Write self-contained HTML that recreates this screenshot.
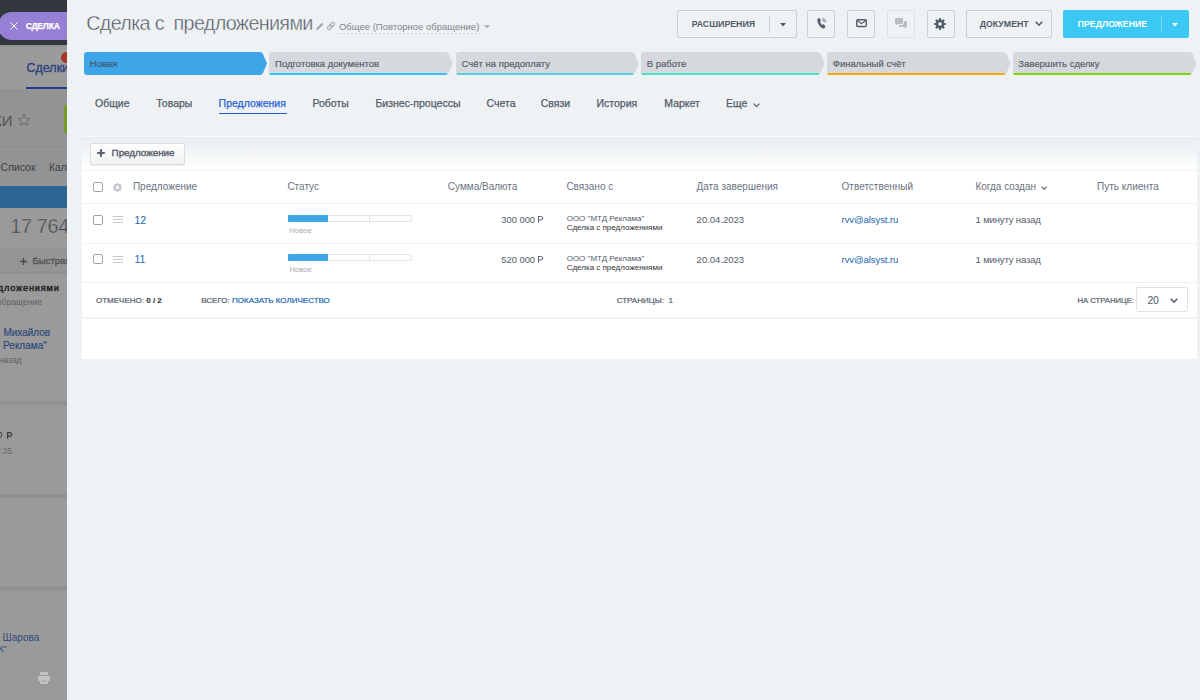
<!DOCTYPE html>
<html><head><meta charset="utf-8">
<style>
*{box-sizing:border-box;margin:0;padding:0}
html,body{width:1200px;height:700px;overflow:hidden;font-family:"Liberation Sans",sans-serif;background:#eef2f4;position:relative}
.abs{position:absolute}
.t{position:absolute;white-space:nowrap;line-height:1}
svg{position:absolute;overflow:visible}
</style></head>
<body>
<div class="abs" style="left:0px;top:0px;width:67px;height:700px;background:#9a9a9a"></div>
<div class="abs" style="left:0px;top:45px;width:67px;height:44px;background:#9b9b9b"></div>
<div class="abs" style="left:0px;top:89px;width:67px;height:97px;background:#929394"></div>
<div class="abs" style="left:0px;top:248px;width:67px;height:23px;background:#959595"></div>
<div class="abs" style="left:0px;top:0px;width:67px;height:45px;background:#33373e"></div>
<div class="abs" style="left:0px;top:45px;width:67px;height:2px;background:linear-gradient(rgba(0,0,0,.07),rgba(0,0,0,0))"></div>
<div class="abs" style="left:-2px;top:12px;width:69px;height:28px;background:#9580d5;border-radius:14px 0 0 14px"></div>
<svg style="left:10px;top:22px" width="8" height="8"><path d="M0.5 0.5L7.5 7.5M7.5 0.5L0.5 7.5" stroke="#fff" stroke-width="1"/></svg>
<div class="t" style="left:25.66px;top:22.32px;font-size:8.6px;color:#fff;font-weight:700;letter-spacing:-0.25px;-webkit-text-stroke:0.25px #fff">СДЕЛКА</div>
<div class="abs" style="left:61px;top:52px;width:11px;height:11px;border-radius:50%;background:#a3372a"></div>
<div class="t" style="left:26.50px;top:61.92px;font-size:12.5px;color:#2d3f7e;-webkit-text-stroke:0.35px #2d3f7e">Сделки</div>
<div class="abs" style="left:26px;top:87px;width:41px;height:2px;background:#1f3f86"></div>
<div class="abs" style="left:0px;top:146px;width:67px;height:1px;background:#8b8e8f"></div>
<div class="t" style="left:-6.80px;top:113.10px;font-size:15px;color:#2f2f2f;letter-spacing:-0.2px;-webkit-text-stroke:0.4px #929394">КИ</div>
<svg style="left:17px;top:113px" width="14" height="14" viewBox="0 0 24 24"><path d="M12 2l2.9 6.9 7.1.6-5.4 4.7 1.7 7.2L12 17.6 5.7 21.4l1.7-7.2L2 9.5l7.1-.6z" fill="none" stroke="#6b6b6b" stroke-width="1.6"/></svg>
<div class="abs" style="left:63.5px;top:105px;width:3.5px;height:28px;background:#739d27"></div>
<div class="t" style="left:0.58px;top:162.11px;font-size:10.5px;color:#3f3f3f;">Список</div>
<div class="t" style="left:48.88px;top:162.11px;font-size:10.5px;color:#3f3f3f;">Кал</div>
<div class="abs" style="left:0px;top:186px;width:67px;height:22px;background:#2b6591"></div>
<div class="t" style="left:10.21px;top:217.24px;font-size:19.8px;color:#44484d;letter-spacing:-0.3px;-webkit-text-stroke:0.45px #9a9a9a">17 764</div>
<svg style="left:20px;top:258px" width="7" height="7"><path d="M3.5 0V7M0 3.5H7" stroke="#4a4a4a" stroke-width="1.4"/></svg>
<div class="t" style="left:32.62px;top:255.96px;font-size:9.5px;color:#505050;-webkit-text-stroke:0.3px #505050">Быстрая</div>
<div class="abs" style="left:0px;top:271px;width:67px;height:3px;background:#8f9193"></div>
<div class="t" style="left:-2.17px;top:283.91px;font-size:9.2px;color:#262626;letter-spacing:0.8px;-webkit-text-stroke:0.45px #262626">дложениями</div>
<div class="t" style="left:-2.94px;top:297.60px;font-size:8.5px;color:#5e5e5e;">обращение</div>
<div class="t" style="left:3.40px;top:327.54px;font-size:10px;color:#304a7c;-webkit-text-stroke:0.2px #304a7c">Михайлов</div>
<div class="t" style="left:3.10px;top:340.54px;font-size:10px;color:#304a7c;-webkit-text-stroke:0.2px #304a7c">Реклама"</div>
<div class="t" style="left:-1.34px;top:355.80px;font-size:8.5px;color:#5e5e5e;">назад</div>
<div class="abs" style="left:0px;top:401px;width:67px;height:4px;background:#8f9193"></div>
<div class="t" style="left:-2.77px;top:431.21px;font-size:9.2px;color:#3b3b3b;">0</div>
<svg style="left:6.60px;top:432.30px" width="6.03" height="6.80" viewBox="0 0 6.03 6.80"><path d="M0.60 0V6.80M0.60 0.60H2.96A1.47 1.47 0 0 1 2.96 4.14H0" fill="none" stroke="#3b3b3b" stroke-width="1.2"/></svg>
<div class="t" style="left:-0.36px;top:447.38px;font-size:9px;color:#6a6a6a;">:35</div>
<div class="abs" style="left:0px;top:494px;width:67px;height:4px;background:#8f9193"></div>
<div class="abs" style="left:0px;top:586px;width:67px;height:5px;background:#8f9193"></div>
<div class="t" style="left:2.60px;top:632.53px;font-size:10px;color:#2d4a7e;">Шарова</div>
<div class="t" style="left:-1.86px;top:645.38px;font-size:9px;color:#304a7c;">К"</div>
<svg style="left:38px;top:672px" width="12" height="12"><rect x="2" y="0" width="8" height="3" fill="#c4c4c4"/><rect x="0" y="4" width="12" height="5" rx="1" fill="#c4c4c4"/><rect x="2" y="8" width="8" height="4" fill="#c4c4c4"/><rect x="3" y="8.5" width="6" height="1.2" fill="#a8a8a8"/></svg>
<div class="abs" style="left:67px;top:0px;width:1133px;height:700px;background:#eef2f4"></div>
<div class="t" style="left:86.21px;top:14.24px;font-size:19.8px;color:#474f5a;letter-spacing:-0.68px;-webkit-text-stroke:0.45px #eef2f4">Сделка с&nbsp; предложениями</div>
<svg style="left:315px;top:22px" width="9" height="9"><path d="M1.2 7.9L1.7 5.9L6.2 1.4Q7 0.6 7.8 1.4Q8.5 2.2 7.7 3L3.2 7.4z" fill="#a3a8af"/></svg>
<svg style="left:326px;top:21px" width="10" height="10"><g transform="rotate(-45 5 5)" fill="none" stroke="#a8adb4" stroke-width="1.1"><rect x="0.6" y="3.4" width="5.4" height="3.2" rx="1.6"/><rect x="4" y="3.4" width="5.4" height="3.2" rx="1.6"/></g></svg>
<div class="t" style="left:338.92px;top:21.96px;font-size:9.5px;color:#80868e;">Общее (Повторное обращение)</div>
<div class="abs" style="left:339px;top:32.5px;width:141px;height:1px;background:repeating-linear-gradient(90deg,#c9cdd2 0 2px,transparent 2px 4px);opacity:.75"></div>
<svg style="left:484px;top:25px" width="6" height="4"><path d="M0 0H6L3 3.5z" fill="#b0b5bb"/></svg>
<div class="abs" style="left:677px;top:10px;width:120px;height:28px;border:1px solid #c8ced3;border-radius:2px"></div>
<div class="t" style="left:691.65px;top:20.25px;font-size:8.8px;color:#535c69;font-weight:700;letter-spacing:0px;">РАСШИРЕНИЯ</div>
<div class="abs" style="left:769px;top:16px;width:1px;height:17px;background:#c8ced3"></div>
<svg style="left:780px;top:23px" width="6" height="4"><path d="M0 0H6L3 3.5z" fill="#535c69"/></svg>
<div class="abs" style="left:807px;top:10px;width:28px;height:28px;border:1px solid #c8ced3;border-radius:2px"></div>
<div class="abs" style="left:847px;top:10px;width:28px;height:28px;border:1px solid #c8ced3;border-radius:2px"></div>
<div class="abs" style="left:887px;top:10px;width:28px;height:28px;border:1px solid #dfe3e6;border-radius:2px"></div>
<div class="abs" style="left:927px;top:10px;width:28px;height:28px;border:1px solid #c8ced3;border-radius:2px"></div>
<svg style="left:815.5px;top:17px" width="12" height="13" viewBox="0 0 12 14"><path d="M2.2 1.2c.5-.3 1-.2 1.3.2l1.2 1.8c.3.4.2.9-.1 1.2l-.7.6c.4 1.3 1.2 2.6 2.3 3.5l.8-.5c.4-.2.9-.2 1.2.2l1.3 1.7c.3.4.3 1-.1 1.3l-.8.7c-.6.5-1.5.6-2.2.2C3.8 10.6 1.6 7.6.9 4.1.7 3.3 1 2.5 1.6 1.8z" fill="#535c69"/><path d="M6.5 1.5a4.5 4.5 0 0 1 3.8 3.8M6.3 3.4a2.6 2.6 0 0 1 2.2 2.2" fill="none" stroke="#535c69" stroke-width="0.9"/></svg>
<svg style="left:855.5px;top:19.2px" width="11" height="8.3" viewBox="0 0 12 9"><rect x="0.8" y="0.8" width="10.4" height="7.4" rx="1" fill="none" stroke="#535c69" stroke-width="1.5"/><path d="M1.2 1.5L6 5l4.8-3.5" fill="none" stroke="#535c69" stroke-width="1.3"/></svg>
<svg style="left:895px;top:18px" width="12" height="12" viewBox="0 0 12 12"><path d="M0 1a1 1 0 0 1 1-1h6a1 1 0 0 1 1 1v4a1 1 0 0 1-1 1H3L1.2 7.5V6H1a1 1 0 0 1-1-1z" fill="#b9bec4"/><path d="M9 3h2a1 1 0 0 1 1 1v4a1 1 0 0 1-1 1h-.2v1.5L9 9H5a1 1 0 0 1-1-1V7h3.2A1.8 1.8 0 0 0 9 5.2z" fill="#b9bec4"/></svg>
<svg style="left:934.2px;top:18px" width="12" height="12" viewBox="0 0 24 24"><path d="M9.36 4.03 L10.44 0.10 L13.56 0.10 L14.64 4.03 L15.77 4.49 L19.31 2.49 L21.51 4.69 L19.51 8.23 L19.97 9.36 L23.90 10.44 L23.90 13.56 L19.97 14.64 L19.51 15.77 L21.51 19.31 L19.31 21.51 L15.77 19.51 L14.64 19.97 L13.56 23.90 L10.44 23.90 L9.36 19.97 L8.23 19.51 L4.69 21.51 L2.49 19.31 L4.49 15.77 L4.03 14.64 L0.10 13.56 L0.10 10.44 L4.03 9.36 L4.49 8.23 L2.49 4.69 L4.69 2.49 L8.23 4.49z M12 8.4a3.6 3.6 0 1 0 0 7.2a3.6 3.6 0 1 0 0-7.2z" fill="#535c69" fill-rule="evenodd"/></svg>
<div class="abs" style="left:966px;top:10px;width:86px;height:28px;border:1px solid #c8ced3;border-radius:2px"></div>
<div class="t" style="left:979.65px;top:20.25px;font-size:8.8px;color:#535c69;font-weight:700;letter-spacing:0px;">ДОКУМЕНТ</div>
<svg style="left:1035px;top:21px" width="8" height="6"><path d="M0.8 0.8L4 4.2L7.2 0.8" fill="none" stroke="#535c69" stroke-width="1.6"/></svg>
<div class="abs" style="left:1063px;top:10px;width:126px;height:28px;background:#3bc8f5;border-radius:2px"></div>
<div class="t" style="left:1077.65px;top:20.25px;font-size:8.8px;color:#fff;font-weight:700;letter-spacing:0px;">ПРЕДЛОЖЕНИЕ</div>
<div class="abs" style="left:1161px;top:16px;width:1px;height:17px;background:rgba(255,255,255,.35)"></div>
<svg style="left:1172px;top:23px" width="6" height="4"><path d="M0 0H6L3 3.5z" fill="#fff"/></svg>
<svg style="left:84px;top:52px" width="183.0" height="23"><path d="M3 0H176.0Q178.0 0 179.0 2L183.0 11.5L179.0 21Q178.0 23 176.0 23H3Q0 23 0 20V3Q0 0 3 0z" fill="#3ea6e8"/></svg>
<div class="t" style="left:89.82px;top:58.96px;font-size:9.5px;color:#43566b;-webkit-text-stroke:0.2px #43566b">Новая</div>
<svg style="left:269.3px;top:52px" width="183.7" height="23"><path d="M3 0H176.7Q178.7 0 179.7 2L183.7 11.5L179.7 21Q178.7 23 176.7 23H3Q0 23 0 20V3Q0 0 3 0z" fill="#d5d8dc"/><rect x="0.5" y="21" width="177.7" height="2" rx="1" fill="#2fc6f6"/></svg>
<div class="t" style="left:275.12px;top:58.96px;font-size:9.5px;color:#59616c;-webkit-text-stroke:0.2px #59616c">Подготовка документов</div>
<svg style="left:455.8px;top:52px" width="182.8" height="23"><path d="M3 0H175.8Q177.8 0 178.8 2L182.8 11.5L178.8 21Q177.8 23 175.8 23H3Q0 23 0 20V3Q0 0 3 0z" fill="#d5d8dc"/><rect x="0.5" y="21" width="176.8" height="2" rx="1" fill="#55d0e0"/></svg>
<div class="t" style="left:461.62px;top:58.96px;font-size:9.5px;color:#59616c;-webkit-text-stroke:0.2px #59616c">Счёт на предоплату</div>
<svg style="left:641px;top:52px" width="183.6" height="23"><path d="M3 0H176.6Q178.6 0 179.6 2L183.6 11.5L179.6 21Q178.6 23 176.6 23H3Q0 23 0 20V3Q0 0 3 0z" fill="#d5d8dc"/><rect x="0.5" y="21" width="177.6" height="2" rx="1" fill="#47e4c2"/></svg>
<div class="t" style="left:646.82px;top:58.96px;font-size:9.5px;color:#59616c;-webkit-text-stroke:0.2px #59616c">В работе</div>
<svg style="left:827px;top:52px" width="183.5" height="23"><path d="M3 0H176.5Q178.5 0 179.5 2L183.5 11.5L179.5 21Q178.5 23 176.5 23H3Q0 23 0 20V3Q0 0 3 0z" fill="#d5d8dc"/><rect x="0.5" y="21" width="177.5" height="2" rx="1" fill="#ffa900"/></svg>
<div class="t" style="left:832.82px;top:58.96px;font-size:9.5px;color:#59616c;-webkit-text-stroke:0.2px #59616c">Финальный счёт</div>
<svg style="left:1012.5px;top:52px" width="183.5" height="23"><path d="M3 0H176.5Q178.5 0 179.5 2L183.5 11.5L179.5 21Q178.5 23 176.5 23H3Q0 23 0 20V3Q0 0 3 0z" fill="#d5d8dc"/><rect x="0.5" y="21" width="177.5" height="2" rx="1" fill="#7bd500"/></svg>
<div class="t" style="left:1018.32px;top:58.96px;font-size:9.5px;color:#59616c;-webkit-text-stroke:0.2px #59616c">Завершить сделку</div>
<div class="t" style="left:94.98px;top:98.11px;font-size:10.5px;color:#535c69;-webkit-text-stroke:0.25px #535c69">Общие</div>
<div class="t" style="left:156.28px;top:98.11px;font-size:10.5px;color:#535c69;-webkit-text-stroke:0.25px #535c69">Товары</div>
<div class="t" style="left:218.58px;top:98.11px;font-size:10.5px;color:#2a64d6;-webkit-text-stroke:0.25px #2a64d6">Предложения</div>
<div class="t" style="left:312.38px;top:98.11px;font-size:10.5px;color:#535c69;-webkit-text-stroke:0.25px #535c69">Роботы</div>
<div class="t" style="left:375.38px;top:98.11px;font-size:10.5px;color:#535c69;-webkit-text-stroke:0.25px #535c69">Бизнес-процессы</div>
<div class="t" style="left:486.58px;top:98.11px;font-size:10.5px;color:#535c69;-webkit-text-stroke:0.25px #535c69">Счета</div>
<div class="t" style="left:540.78px;top:98.11px;font-size:10.5px;color:#535c69;-webkit-text-stroke:0.25px #535c69">Связи</div>
<div class="t" style="left:596.48px;top:98.11px;font-size:10.5px;color:#535c69;-webkit-text-stroke:0.25px #535c69">История</div>
<div class="t" style="left:664.28px;top:98.11px;font-size:10.5px;color:#535c69;-webkit-text-stroke:0.25px #535c69">Маркет</div>
<div class="t" style="left:725.88px;top:98.11px;font-size:10.5px;color:#535c69;-webkit-text-stroke:0.25px #535c69">Еще</div>
<div class="abs" style="left:219px;top:112.5px;width:68px;height:1.6px;background:#1f5bd0;border-radius:1px"></div>
<svg style="left:753px;top:103px" width="7" height="5"><path d="M0.6 0.6L3.5 3.6L6.4 0.6" fill="none" stroke="#535c69" stroke-width="1.2"/></svg>
<div class="abs" style="left:82px;top:136px;width:1115px;height:223px;background:#fff;border-radius:2px 2px 0 0"></div>
<div class="abs" style="left:82px;top:137px;width:1115px;height:33px;background:linear-gradient(#e9eef1,#fff)"></div>
<div class="abs" style="left:82px;top:136px;width:1115px;height:1px;background:#f7f9fa;border-radius:2px 2px 0 0"></div>
<div class="abs" style="left:82px;top:170px;width:1115px;height:1px;background:#f0f2f4"></div>
<div class="abs" style="left:90px;top:142.5px;width:95px;height:22px;background:linear-gradient(#fff,#f0f2f4);border:1px solid #d9dee2;border-radius:2px;box-shadow:0 1px 1px rgba(0,0,0,.08)"></div>
<svg style="left:96.5px;top:149.3px" width="8" height="8"><path d="M4 1V7M1 4H7" stroke="#5c6470" stroke-width="2.2" stroke-linecap="round"/></svg>
<div class="t" style="left:111.60px;top:147.62px;font-size:9.9px;color:#59616d;letter-spacing:-0.05px;-webkit-text-stroke:0.4px #59616d">Предложение</div>
<div class="abs" style="left:93px;top:182px;width:10px;height:10px;border:1px solid #9ea3a9;border-radius:2px;background:#fff"></div>
<svg style="left:113px;top:183px" width="9" height="9" viewBox="0 0 24 24"><path d="M10 0h4l.6 3.2 2.2.9 2.7-1.9 2.8 2.8-1.9 2.7.9 2.2L24 10v4l-3.2.6-.9 2.2 1.9 2.7-2.8 2.8-2.7-1.9-2.2.9L14 24h-4l-.6-3.2-2.2-.9-2.7 1.9-2.8-2.8 1.9-2.7-.9-2.2L0 14v-4l3.2-.6.9-2.2L2.2 4.5 5 1.7l2.7 1.9 2.2-.9z M12 7.5a4.5 4.5 0 1 0 0 9 4.5 4.5 0 0 0 0-9z" fill="#c0c4c9" fill-rule="evenodd"/></svg>
<div class="t" style="left:132.90px;top:181.84px;font-size:10px;color:#6a737f;">Предложение</div>
<div class="t" style="left:287.40px;top:181.84px;font-size:10px;color:#6a737f;">Статус</div>
<div class="t" style="left:447.80px;top:181.84px;font-size:10px;color:#6a737f;">Сумма/Валюта</div>
<div class="t" style="left:566.40px;top:181.84px;font-size:10px;color:#6a737f;">Связано с</div>
<div class="t" style="left:696.50px;top:181.84px;font-size:10px;color:#6a737f;">Дата завершения</div>
<div class="t" style="left:841.60px;top:181.84px;font-size:10px;color:#6a737f;">Ответственный</div>
<div class="t" style="left:975.40px;top:181.84px;font-size:10px;color:#6a737f;">Когда создан</div>
<div class="t" style="left:1097.10px;top:181.84px;font-size:10px;color:#6a737f;">Путь клиента</div>
<svg style="left:1041px;top:185.8px" width="7" height="4"><path d="M0.7 0.7L3.2 3.1L5.7 0.7" fill="none" stroke="#6a737f" stroke-width="1.2"/></svg>
<div class="abs" style="left:82px;top:203px;width:1115px;height:1px;background:#eef0f2"></div>
<div class="abs" style="left:82px;top:243px;width:1115px;height:1px;background:#f1f3f5"></div>
<div class="abs" style="left:82px;top:282px;width:1115px;height:1px;background:#eef0f2"></div>
<div class="abs" style="left:93px;top:214.5px;width:10px;height:10px;border:1px solid #9ea3a9;border-radius:2px;background:#fff"></div>
<svg style="left:113px;top:216.0px" width="10" height="8"><path d="M0 0.5H10M0 3.5H10M0 6.5H10" stroke="#c6cacf" stroke-width="1"/></svg>
<div class="t" style="left:134.58px;top:214.91px;font-size:10.5px;color:#2067b0;letter-spacing:-0.2px;">12</div>
<div class="abs" style="left:288px;top:214.5px;width:124px;height:7px;border:1px solid #dfe2e6;border-radius:2px;background:#fff"></div>
<div class="abs" style="left:288px;top:214.5px;width:40px;height:7px;background:#3ea6e8;border-radius:1px 0 0 1px"></div>
<div class="abs" style="left:369px;top:215.0px;width:1px;height:6px;background:#dfe2e6"></div>
<div class="t" style="left:289.39px;top:226.98px;font-size:7.7px;color:#a8adb4;">Новое</div>
<div class="t" style="left:435px;width:100px;text-align:right;top:215.06px;font-size:9.5px;letter-spacing:-0.1px;color:#535c69">300 000</div>
<svg style="left:538.20px;top:216.20px" width="5.96" height="6.70" viewBox="0 0 5.96 6.70"><path d="M0.53 0V6.70M0.53 0.53H2.95A1.48 1.48 0 0 1 2.95 4.01H0" fill="none" stroke="#656c77" stroke-width="1.05"/></svg>
<div class="t" style="left:566.68px;top:215.23px;font-size:8px;color:#535c69;">ООО "МТД Реклама"</div>
<div class="t" style="left:566.68px;top:224.23px;font-size:8px;color:#333;">Сделка с предложениями</div>
<div class="t" style="left:696.62px;top:215.06px;font-size:9.5px;color:#535c69;letter-spacing:0px;">20.04.2023</div>
<div class="t" style="left:841.62px;top:215.06px;font-size:9.5px;color:#2067b0;letter-spacing:-0.08px;">rvv@alsyst.ru</div>
<div class="t" style="left:975.62px;top:215.06px;font-size:9.5px;color:#535c69;letter-spacing:-0.15px;">1 минуту назад</div>
<div class="abs" style="left:93px;top:254.0px;width:10px;height:10px;border:1px solid #9ea3a9;border-radius:2px;background:#fff"></div>
<svg style="left:113px;top:255.5px" width="10" height="8"><path d="M0 0.5H10M0 3.5H10M0 6.5H10" stroke="#c6cacf" stroke-width="1"/></svg>
<div class="t" style="left:134.58px;top:254.41px;font-size:10.5px;color:#2067b0;letter-spacing:-0.2px;">11</div>
<div class="abs" style="left:288px;top:254.0px;width:124px;height:7px;border:1px solid #dfe2e6;border-radius:2px;background:#fff"></div>
<div class="abs" style="left:288px;top:254.0px;width:40px;height:7px;background:#3ea6e8;border-radius:1px 0 0 1px"></div>
<div class="abs" style="left:369px;top:254.5px;width:1px;height:6px;background:#dfe2e6"></div>
<div class="t" style="left:289.39px;top:266.48px;font-size:7.7px;color:#a8adb4;">Новое</div>
<div class="t" style="left:435px;width:100px;text-align:right;top:254.56px;font-size:9.5px;letter-spacing:-0.1px;color:#535c69">520 000</div>
<svg style="left:538.20px;top:255.70px" width="5.96" height="6.70" viewBox="0 0 5.96 6.70"><path d="M0.53 0V6.70M0.53 0.53H2.95A1.48 1.48 0 0 1 2.95 4.01H0" fill="none" stroke="#656c77" stroke-width="1.05"/></svg>
<div class="t" style="left:566.68px;top:254.73px;font-size:8px;color:#535c69;">ООО "МТД Реклама"</div>
<div class="t" style="left:566.68px;top:263.73px;font-size:8px;color:#333;">Сделка с предложениями</div>
<div class="t" style="left:696.62px;top:254.56px;font-size:9.5px;color:#535c69;letter-spacing:0px;">20.04.2023</div>
<div class="t" style="left:841.62px;top:254.56px;font-size:9.5px;color:#2067b0;letter-spacing:-0.08px;">rvv@alsyst.ru</div>
<div class="t" style="left:975.62px;top:254.56px;font-size:9.5px;color:#535c69;letter-spacing:-0.15px;">1 минуту назад</div>
<div class="t" style="left:95.98px;top:297.03px;font-size:8px;color:#535c69;-webkit-text-stroke:0.2px #535c69">ОТМЕЧЕНО: <b style='color:#333'>0 / 2</b></div>
<div class="t" style="left:201.28px;top:297.03px;font-size:8px;color:#535c69;-webkit-text-stroke:0.2px #535c69">ВСЕГО: <span style='color:#2067b0;-webkit-text-stroke:0.2px #2067b0'>ПОКАЗАТЬ КОЛИЧЕСТВО</span></div>
<div class="t" style="left:616.68px;top:297.03px;font-size:8px;color:#535c69;-webkit-text-stroke:0.2px #535c69">СТРАНИЦЫ:&nbsp; 1</div>
<div class="t" style="left:1077.39px;top:297.28px;font-size:7.7px;color:#535c69;-webkit-text-stroke:0.2px #535c69">НА СТРАНИЦЕ:</div>
<div class="abs" style="left:1136px;top:287px;width:52px;height:25px;border:1px solid #dfe3e6;border-radius:2px;background:#fff"></div>
<div class="t" style="left:1147.58px;top:295.11px;font-size:10.5px;color:#535c69;letter-spacing:-0.3px;">20</div>
<svg style="left:1170px;top:297.8px" width="8" height="6"><path d="M0.8 0.8L4 4.2L7.2 0.8" fill="none" stroke="#535c69" stroke-width="1.6"/></svg>
<div class="abs" style="left:82px;top:316.5px;width:1115px;height:2px;background:#eef2f4"></div>
</body></html>
